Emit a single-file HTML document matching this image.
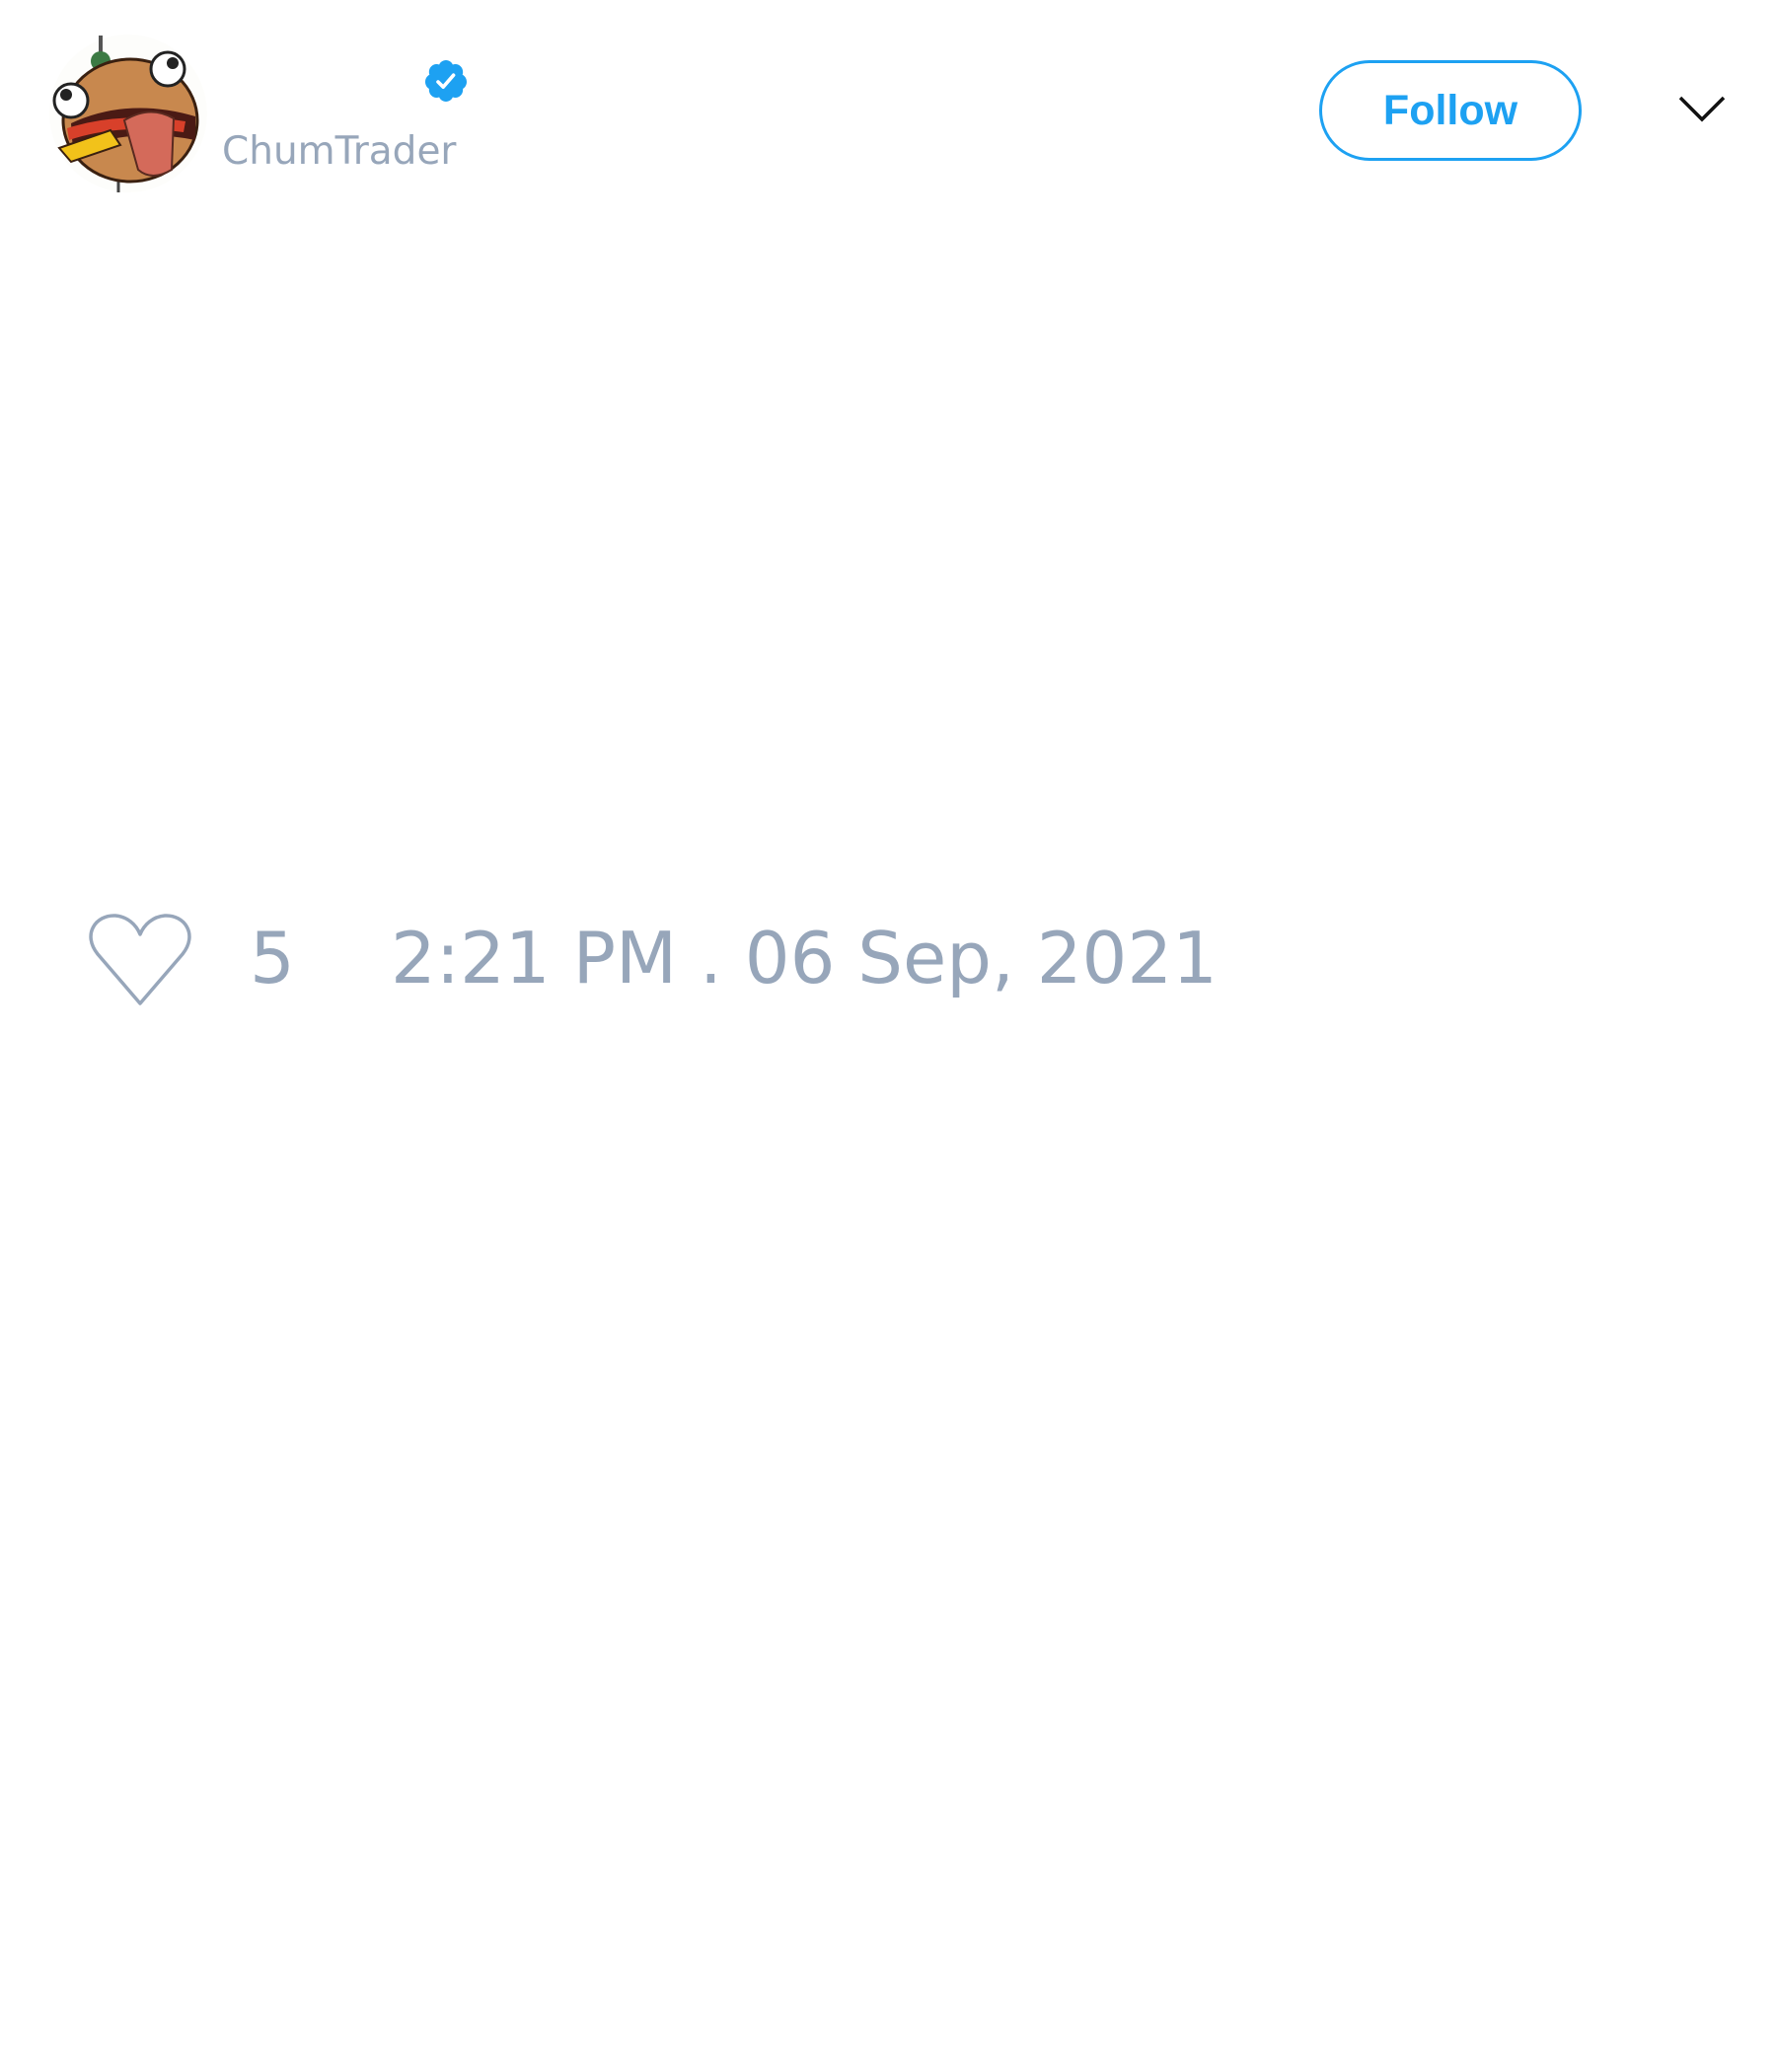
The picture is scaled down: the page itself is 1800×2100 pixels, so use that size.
<!DOCTYPE html>
<html><head><meta charset="utf-8"><style>
html,body{margin:0;padding:0;background:#fff;width:1800px;height:2100px;overflow:hidden;font-family:"DejaVu Sans","Liberation Sans",sans-serif}
.a{position:absolute}
</style></head><body>
<svg class="a" style="left:50px;top:30px" width="160" height="170" viewBox="0 0 160 170">
 <circle cx="80" cy="85" r="80" fill="#fdfdfb"/>
 <line x1="52" y1="6" x2="52" y2="30" stroke="#555" stroke-width="4"/>
 <circle cx="52" cy="32" r="10" fill="#3c7a44"/>
 <line x1="70" y1="150" x2="70" y2="165" stroke="#444" stroke-width="3"/>
 <ellipse cx="82" cy="92" rx="68" ry="62" fill="#c8884e" stroke="#3a2010" stroke-width="3"/>
 <path d="M22 95 Q80 68 148 88 L148 112 Q80 98 24 124 Z" fill="#4a1a14"/>
 <path d="M18 100 Q70 83 138 93 L136 104 Q70 95 20 112 Z" fill="#d8402a"/>
 <path d="M10 120 L62 102 L72 117 L22 134 Z" fill="#f2c21a" stroke="#3a2010" stroke-width="2"/>
 <path d="M76 92 Q102 76 126 90 L124 142 Q104 154 90 142 Z" fill="#d46a5a" stroke="#5a2a20" stroke-width="2"/>
 <circle cx="22" cy="72" r="17" fill="#fff" stroke="#222" stroke-width="3"/><circle cx="17" cy="66" r="6" fill="#222"/>
 <circle cx="120" cy="40" r="17" fill="#fff" stroke="#222" stroke-width="3"/><circle cx="125" cy="34" r="6" fill="#222"/>
</svg>
<svg class="a" style="left:428px;top:58px" width="48" height="48" viewBox="0 0 24 24">
 <path fill="#1da1f2" d="M22.5 12.5c0-1.58-.875-2.95-2.148-3.6.154-.435.238-.905.238-1.4 0-2.21-1.71-3.998-3.818-3.998-.47 0-.92.084-1.336.25C14.818 2.415 13.51 1.5 12 1.5s-2.816.917-3.437 2.25c-.415-.165-.866-.25-1.336-.25-2.11 0-3.818 1.79-3.818 4 0 .494.083.964.237 1.4-1.272.65-2.147 2.018-2.147 3.6 0 1.495.782 2.798 1.942 3.486-.02.17-.032.34-.032.514 0 2.21 1.708 4 3.818 4 .47 0 .92-.086 1.335-.25.62 1.334 1.926 2.25 3.437 2.25 1.512 0 2.818-.916 3.437-2.25.415.163.865.248 1.336.248 2.11 0 3.818-1.79 3.818-4 0-.174-.012-.344-.033-.513 1.158-.687 1.943-1.99 1.943-3.484z"/>
 <path d="M8 12.5l2.6 2.6 5.2-6" fill="none" stroke="#fff" stroke-width="1.8" stroke-linecap="round" stroke-linejoin="round"/>
</svg>
<div class="a" style="left:225px;top:134px;font-size:39px;color:#97a6ba;line-height:1">ChumTrader</div>
<div class="a" style="left:1337px;top:61px;width:260px;height:96px;border:3px solid #1da1f2;border-radius:52px;color:#1da1f2;font-weight:bold;font-size:43px;line-height:96px;text-align:center;font-family:'Liberation Sans',sans-serif">Follow</div>
<svg class="a" style="left:1700px;top:95px" width="50" height="32" viewBox="0 0 50 32"><path d="M3 4 L25 26 L47 4" fill="none" stroke="#111" stroke-width="3.5"/></svg>
<svg class="a" style="left:87px;top:925px" width="110" height="98" viewBox="0 0 110 98">
 <path d="M55 92 L12 42 C-4 22 10 2 30 3 C42 4 51 12 55 22 C59 12 68 4 80 3 C100 2 114 22 98 42 Z" fill="none" stroke="#97a6ba" stroke-width="3.5" stroke-linejoin="round"/>
</svg>
<div class="a" style="left:253px;top:935px;font-size:72px;color:#97a6ba;line-height:1">5</div>
<div class="a" style="left:396px;top:935px;font-size:72px;color:#97a6ba;line-height:1;white-space:nowrap">2:21 PM . 06 Sep, 2021</div>
</body></html>
